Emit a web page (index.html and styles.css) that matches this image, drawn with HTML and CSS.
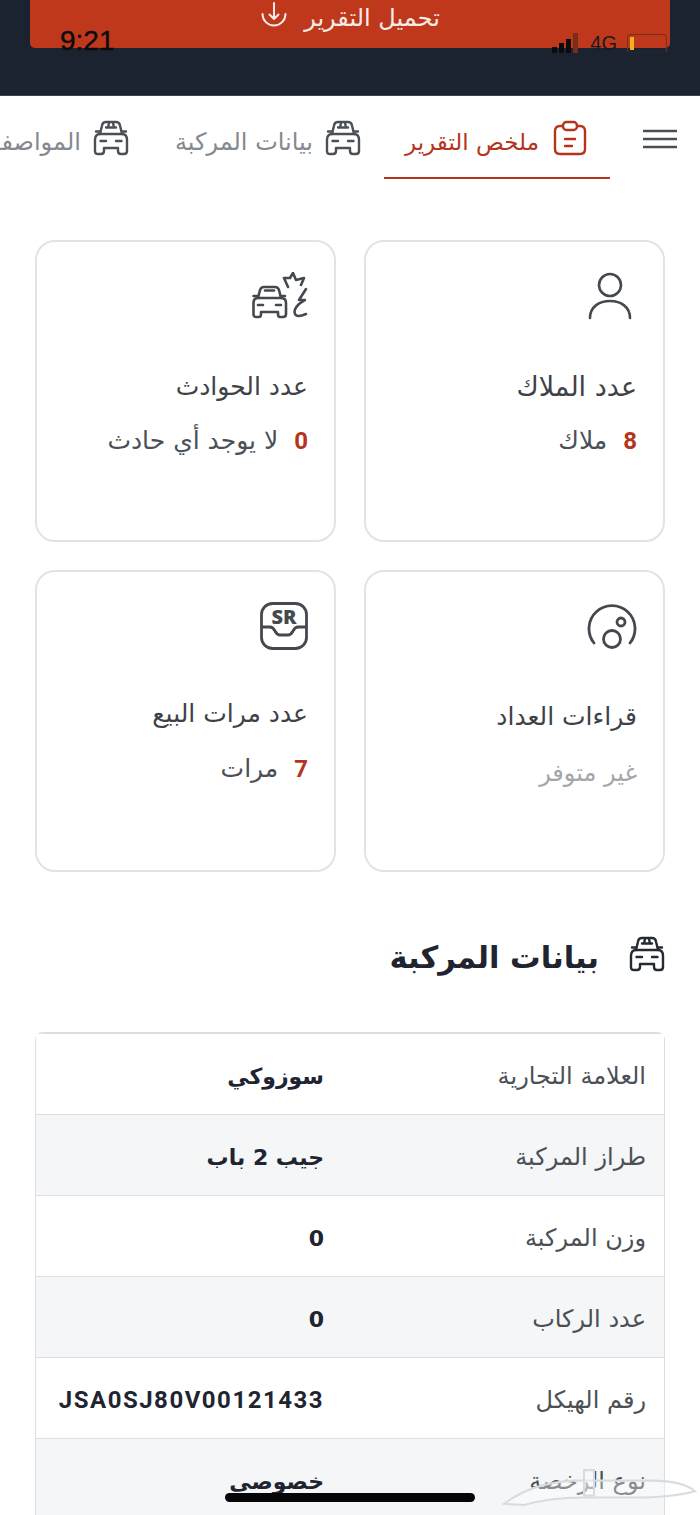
FILE: index.html
```html
<!DOCTYPE html>
<html lang="ar" dir="rtl">
<head>
<meta charset="utf-8">
<title>ملخص التقرير</title>
<link rel="stylesheet" href="styles.css">
</head>
<body>
<svg class="defs" width="0" height="0" aria-hidden="true">
  <symbol id="car" viewBox="0 0 36 36">
    <g fill="none" stroke="currentColor" stroke-width="2.400" stroke-linecap="round" stroke-linejoin="round">
      <path d="M7 14 9 5.500Q9.500 2 13 2H23Q26.500 2 27 5.500L29 14"/>
      <path d="M13 7.500H23M16 3 15 7.500M20 3 21 7.500"/>
      <path d="M3 11.500H7M29 11.500H33"/>
      <path d="M7 14H29Q34 14 34 20V31Q34 34 31 34H28Q25 34 25 31V28H11V31Q11 34 8 34H5Q2 34 2 31V20Q2 14 7 14Z"/>
      <path d="M7.500 21H13M23 21H28.500"/>
    </g>
  </symbol>
</svg>

<header class="topbar">
  <div class="download">
    <span>تحميل التقرير</span>
    <svg class="download-icon" viewBox="0 0 28 28" fill="none" stroke="currentColor" stroke-width="2" stroke-linecap="round" stroke-linejoin="round"><path d="M14 2V18M9.500 13.500 14 18 18.500 13.500M2.500 13A11.500 11.500 0 1 0 25.500 13"/></svg>
  </div>
</header>

<div class="status">
  <span class="time">9:21</span>
  <span class="status-right">
    <span class="signal"><i class="b1"></i><i class="b2"></i><i class="b3"></i><i class="b4"></i></span>
    <span class="net">4G</span>
    <span class="battery"><i></i></span>
  </span>
</div>

<nav class="tabs">
  <svg class="burger" viewBox="0 0 34 20" fill="none" stroke="currentColor" stroke-width="2.400"><path d="M0 2H34M0 10H34M0 18H34"/></svg>
  <a class="tab active">
    <svg class="tab-icon" viewBox="0 0 34 36" fill="none" stroke="currentColor" stroke-width="2.400" stroke-linecap="round" stroke-linejoin="round"><path d="M10 6H7Q2 6 2 11V29Q2 34 7 34H27Q32 34 32 29V11Q32 6 27 6H24"/><rect x="10" y="2" width="14" height="8" rx="3.500"/><path d="M12 19H22M12 26H19"/></svg>
    <span>ملخص التقرير</span>
  </a>
  <a class="tab">
    <svg class="tab-icon car"><use href="#car"/></svg>
    <span>بيانات المركبة</span>
  </a>
  <a class="tab">
    <svg class="tab-icon car"><use href="#car"/></svg>
    <span>المواصفات</span>
  </a>
</nav>

<main class="content">
  <section class="cards">
    <article class="card c-owners">
      <svg class="card-icon" viewBox="0 0 44 48" fill="none" stroke="currentColor" stroke-width="2.600" stroke-linecap="round"><circle cx="22" cy="13" r="11"/><path d="M2 46C2 35 11 29 22 29S42 35 42 46"/></svg>
      <h3>عدد الملاك</h3>
      <p class="value"><b>8</b> <span>ملاك</span></p>
    </article>
    <article class="card c-crash">
      <svg class="card-icon crash" viewBox="0 0 56 48" fill="none" stroke="currentColor" stroke-width="2.600" stroke-linecap="round" stroke-linejoin="round">
        <path d="M6 26 8 18Q9 15 12 15H23Q26 15 27 18L29 26"/>
        <path d="M13 18.500H22"/>
        <path d="M1.500 24H6M29 24H33"/>
        <path d="M6 26H29Q34 26 34 31V42Q34 45 31 45H28Q26 45 26 42V40H9V42Q9 45 7 45H4Q1.500 45 1.500 42V31Q1.500 26 6 26Z"/>
        <path d="M6 33H11M24 33H29"/>
        <path d="M36 15 32 6 38 6 41 1 44 8 52 6 49 13"/>
        <path d="M54 17 47 28 53 28 47 32Q41 38 43 42 45 46 54 42"/>
      </svg>
      <h3>عدد الحوادث</h3>
      <p class="value"><b>0</b> <span>لا يوجد أي حادث</span></p>
    </article>
    <article class="card c-meter">
      <svg class="card-icon gauge" viewBox="0 0 50 48" fill="none" stroke="currentColor" stroke-width="2.800" stroke-linecap="round"><path d="M7 41A23 23 0 1 1 43 41"/><circle cx="25" cy="37" r="8.500"/><circle cx="34" cy="20" r="4"/></svg>
      <h3>قراءات العداد</h3>
      <p class="value muted"><span>غير متوفر</span></p>
    </article>
    <article class="card c-sales">
      <div class="sr-icon">
        <span>SR</span>
        <svg viewBox="0 0 48 48" fill="none" stroke="currentColor" stroke-width="2.800" stroke-linecap="round" stroke-linejoin="round"><rect x="1.500" y="1.500" width="45" height="45" rx="11"/><path d="M2 25H10Q13 25 15 29 17 33 20 33H28Q31 33 33 29 35 25 38 25H46"/></svg>
      </div>
      <h3>عدد مرات البيع</h3>
      <p class="value"><b>7</b> <span>مرات</span></p>
    </article>
  </section>

  <h2 class="section-title">
    <svg class="title-icon"><use href="#car"/></svg>
    <span>بيانات المركبة</span>
  </h2>

  <div class="table">
    <div class="row"><span class="label">العلامة التجارية</span><span class="val">سوزوكي</span></div>
    <div class="row alt"><span class="label">طراز المركبة</span><span class="val">جيب 2 باب</span></div>
    <div class="row"><span class="label">وزن المركبة</span><span class="val">0</span></div>
    <div class="row alt"><span class="label">عدد الركاب</span><span class="val">0</span></div>
    <div class="row"><span class="label">رقم الهيكل</span><span class="val vin">JSA0SJ80V00121433</span></div>
    <div class="row alt"><span class="label">نوع الرخصة</span><span class="val">خصوصي</span></div>
  </div>
</main>

<svg class="watermark" viewBox="0 0 195 36" preserveAspectRatio="none" fill="rgba(255,255,255,.35)" stroke="#d9dbde" stroke-width="2"><path d="M2 34Q30 14 72 12H150Q180 12 193 22 170 28 130 28H80Q50 28 22 35Z"/><path d="M82 2H92V26H82Z"/></svg>
<div class="home-bar"></div>
</body>
</html>
```
FILE: styles.css
```css
* { box-sizing: border-box; }
html, body { margin: 0; padding: 0; }
body {
  position: relative;
  width: 700px;
  height: 1515px;
  overflow: hidden;
  background: #fff;
  color: #2c3038;
  font-family: "DejaVu Sans", "Noto Sans", sans-serif;
}
.defs { position: absolute; }

.topbar {
  height: 96px;
  background: #1c2330;
  border-bottom: 1px solid #3a4250;
  padding: 0 30px;
}
.download {
  height: 48px;
  background: #c0381b;
  border-radius: 0 0 5px 5px;
  color: #f6ece8;
  font-size: 24px;
  display: flex;
  justify-content: center;
  align-items: flex-start;
  gap: 16px;
  padding: 1px 0 0 0;
}
.download span { line-height: 34px; }
.download-icon { width: 28px; height: 28px; }

.status {
  position: absolute;
  top: 28px;
  left: 60px;
  width: 607px;
  height: 26px;
  display: flex;
  flex-direction: row-reverse;
  justify-content: space-between;
  align-items: center;
  color: #0c0c0e;
  font-family: "Liberation Sans", sans-serif;
}
.time { font-size: 28px; line-height: 26px; direction: ltr; -webkit-text-stroke: 0.4px #0c0c0e; }
.status-right { display: flex; direction: ltr; align-items: flex-end; gap: 10px; padding-top: 3px; }
.signal { display: flex; align-items: flex-end; gap: 2px; height: 20px; margin-right: 2px; }
.signal i { width: 5px; background: #0c0c0e; display: block; }
.signal .b1 { height: 6px; }
.signal .b2 { height: 10px; }
.signal .b3 { height: 14px; }
.signal .b4 { height: 20px; background: #7c2c1a; }
.net { font-size: 20px; line-height: 20px; color: #1a1a1c; }
.battery { width: 40px; height: 19px; border: 1.500px solid #7a2f1c; border-bottom-color: #23262c; border-radius: 4px; display: block; padding: 2px; }
.battery i { display: block; width: 4px; height: 100%; background: #f0b020; }

.tabs {
  height: 83px;
  display: flex;
  align-items: stretch;
  overflow: hidden;
  padding-right: 23px;
  background: #fff;
}
.burger { width: 34px; height: 20px; color: #4b4f56; flex: none; margin-top: 33px; margin-left: 33px; }
.tab {
  flex: none;
  display: flex;
  align-items: center;
  gap: 12px;
  height: 83px;
  padding: 5px 23px 0 23px;
  font-size: 24px;
  color: #85898f;
  border-bottom: 2px solid transparent;
  white-space: nowrap;
}
.tab.active { color: #b5341c; border-bottom-color: #b5341c; font-size: 23px; gap: 14px; padding-left: 21px; }
.tab span { padding-top: 5px; }
.tab-icon { width: 34px; height: 36px; flex: none; margin-bottom: 3px; }
.tab .car { color: #4b4f56; width: 36px; height: 36px; }

.content { padding: 61px 35px 0; }
.cards {
  display: grid;
  grid-template-columns: 301px 301px;
  grid-template-rows: 302px 302px;
  gap: 28px;
}
.card {
  border: 2px solid #e2e3e6;
  border-radius: 20px;
  padding: 30px 26px 0;
  background: #fff;
}
.card-icon { display: block; width: 44px; height: 48px; color: #45494f; }
.c-owners .card-icon { margin-right: 5px; }
.card-icon.crash { width: 56px; height: 48px; }
.card-icon.gauge { width: 50px; }
.card h3 { margin: 52px 0 0; font-size: 25px; font-weight: 400; line-height: 30px; color: #3e4248; }
.c-owners h3 { font-size: 27px; }
.c-sales h3 { margin-top: 49px; }
.c-meter h3 { margin-top: 52px; }
.sr-icon { position: relative; width: 48px; height: 48px; color: #45494f; }
.sr-icon svg { width: 48px; height: 48px; display: block; }
.sr-icon span { position: absolute; top: 3px; left: 0; width: 100%; text-align: center; font: 800 20px/24px "Open Sans", sans-serif; direction: ltr; }
.value { margin: 24px 0 0; font-size: 25px; line-height: 30px; color: #4b4f56; }
.c-sales .value { margin-top: 25px; }
.value b { color: #b5341c; font-family: Roboto, sans-serif; font-weight: 700; font-size: 24px; margin-left: 8px; }
.value.muted { color: #a3a6ab; margin-top: 26px; font-size: 24px; }

.section-title {
  margin: 61px 0 0;
  height: 48px;
  display: flex;
  align-items: center;
  gap: 30px;
  font-size: 30.500px;
  font-weight: 700;
  color: #1f2530;
}
.title-icon { width: 36px; height: 36px; color: #262b33; flex: none; margin-top: -6px; }

.table {
  margin-top: 51px;
  width: 630px;
  border: 1px solid #dcdee1;
  border-top-width: 2px;
  border-bottom: 0;
  border-radius: 8px 8px 0 0;
}
.row {
  height: 81px;
  display: grid;
  grid-template-columns: 322px 1fr;
  align-items: center;
  padding: 4px 18px 0 0;
  border-bottom: 1px solid #dcdee1;
  background: #fff;
}
.row.alt { background: #f5f6f7; }
.label { font-size: 24px; color: #4b4f56; }
.val { font-size: 22px; font-weight: 700; color: #1f2530; }
.vin { font-family: Roboto, sans-serif; font-size: 24px; letter-spacing: 1.500px; direction: ltr; text-align: right; }

.watermark { position: absolute; left: 502px; top: 1468px; width: 195px; height: 38px; }
.home-bar {
  position: absolute;
  left: 225px;
  top: 1493px;
  width: 250px;
  height: 9px;
  border-radius: 5px;
  background: #060608;
}
```
